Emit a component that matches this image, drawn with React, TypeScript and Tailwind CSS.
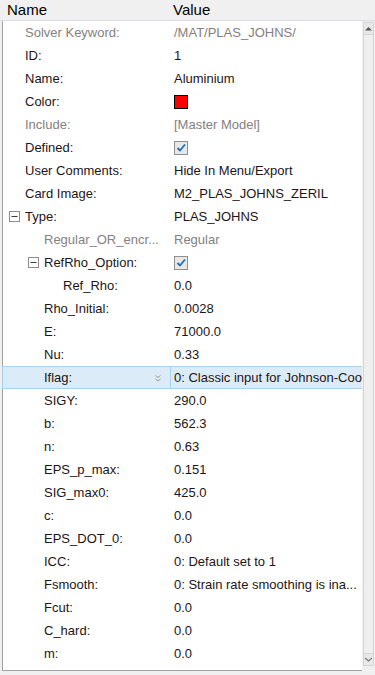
import React from "react";

type Row = {
  label: string;
  value?: string;
  level: number;
  gray?: boolean;
  valueGray?: boolean;
  expander?: boolean;
  kind?: "color" | "check";
  selected?: boolean;
};

const rows: Row[] = [
  { label: "Solver Keyword:", value: "/MAT/PLAS_JOHNS/", level: 0, gray: true, valueGray: true },
  { label: "ID:", value: "1", level: 0 },
  { label: "Name:", value: "Aluminium", level: 0 },
  { label: "Color:", level: 0, kind: "color" },
  { label: "Include:", value: "[Master Model]", level: 0, gray: true, valueGray: true },
  { label: "Defined:", level: 0, kind: "check" },
  { label: "User Comments:", value: "Hide In Menu/Export", level: 0 },
  { label: "Card Image:", value: "M2_PLAS_JOHNS_ZERIL", level: 0 },
  { label: "Type:", value: "PLAS_JOHNS", level: 0, expander: true },
  { label: "Regular_OR_encr...", value: "Regular", level: 1, gray: true, valueGray: true },
  { label: "RefRho_Option:", level: 1, kind: "check", expander: true },
  { label: "Ref_Rho:", value: "0.0", level: 2 },
  { label: "Rho_Initial:", value: "0.0028", level: 1 },
  { label: "E:", value: "71000.0", level: 1 },
  { label: "Nu:", value: "0.33", level: 1 },
  { label: "Iflag:", value: "0: Classic input for Johnson-Cook", level: 1, selected: true },
  { label: "SIGY:", value: "290.0", level: 1 },
  { label: "b:", value: "562.3", level: 1 },
  { label: "n:", value: "0.63", level: 1 },
  { label: "EPS_p_max:", value: "0.151", level: 1 },
  { label: "SIG_max0:", value: "425.0", level: 1 },
  { label: "c:", value: "0.0", level: 1 },
  { label: "EPS_DOT_0:", value: "0.0", level: 1 },
  { label: "ICC:", value: "0: Default set to 1", level: 1 },
  { label: "Fsmooth:", value: "0: Strain rate smoothing is ina...", level: 1 },
  { label: "Fcut:", value: "0.0", level: 1 },
  { label: "C_hard:", value: "0.0", level: 1 },
  { label: "m:", value: "0.0", level: 1 },
];

const pad = ["pl-[22px]", "pl-[41px]", "pl-[60px]"];
const expPos = ["left-[6px]", "left-[25px]", "left-[44px]"];

function Minus() {
  return (
    <svg width="11" height="11" viewBox="0 0 11 11">
      <rect x="0.5" y="0.5" width="10" height="10" fill="#fdfdfd" stroke="#8c8c8c" />
      <line x1="2.5" y1="5.5" x2="8.5" y2="5.5" stroke="#3c3c3c" strokeWidth="1" />
    </svg>
  );
}

function Check() {
  return (
    <svg width="14" height="14" viewBox="0 0 14 14">
      <rect x="0.5" y="0.5" width="13" height="13" fill="#e8e8e8" stroke="#8f8f8f" />
      <path d="M3.5 7 L6 9.5 L11 3.5" fill="none" stroke="#1f6fb0" strokeWidth="1.8" />
    </svg>
  );
}

function Swatch() {
  return <div className="w-[14px] h-[14px] bg-[#ff0000] border border-black" />;
}

export default function App() {
  return (
    <div
      className="w-[375px] h-[675px] bg-[#f0f0f0] flex flex-col overflow-hidden text-[13px] text-[#1e1416]"
      style={{ fontFamily: "'Liberation Sans', Arial, sans-serif" }}
    >
      <div className="h-[21px] flex items-center border-b border-[#d9dce0] text-[15px] text-black shrink-0">
        <div className="w-[171px] pl-[7px]">Name</div>
        <div className="pl-[2px]">Value</div>
      </div>
      <div className="flex flex-1 min-h-0">
        <div className="w-[3px] border-r border-[#a0a0a0] shrink-0" />
        <div className="flex-1 bg-white flex flex-col min-w-0 border-b border-[#a0a0a0]">
          {rows.map((r, i) => (
            <div
              key={i}
              className={`h-[23px] flex items-center shrink-0 ${
                r.selected ? "bg-[#dcebf8] border border-[#a9cff2] -mx-px" : ""
              }`}
            >
              <div
                className={`relative w-[168px] h-full flex items-center whitespace-nowrap shrink-0 ${pad[r.level]} ${
                  r.gray ? "text-[#858080]" : ""
                } ${r.selected ? "border-r border-[#a9cff2] w-[168px]" : ""}`}
              >
                {r.expander && (
                  <div className={`absolute ${expPos[r.level]} top-[6px] flex`}>
                    <Minus />
                  </div>
                )}
                {r.label}
                {r.selected && (
                  <svg className="absolute right-[9px] top-[8px]" width="6" height="7" viewBox="0 0 6 7">
                    <path d="M0.5 0.5 L3 2.5 L5.5 0.5 M0.5 4 L3 6 L5.5 4" fill="none" stroke="#9a9a9a" strokeWidth="1" />
                  </svg>
                )}
              </div>
              <div
                className={`flex-1 min-w-0 pl-[3px] whitespace-nowrap overflow-hidden ${
                  r.valueGray ? "text-[#858080]" : ""
                }`}
              >
                {r.kind === "color" ? <Swatch /> : r.kind === "check" ? <Check /> : r.value}
              </div>
            </div>
          ))}
        </div>
        <div className="w-[13px] shrink-0 flex flex-col pb-[5px] bg-[#f0f0f0]">
          <div className="h-[13px] mt-[1px] mx-px bg-[#e8e8e8] border border-[#d6d6d6] flex items-center justify-center">
            <svg width="7" height="5" viewBox="0 0 7 5">
              <path d="M0 4.5 L3.5 1 L7 4.5 Z" fill="#555" />
            </svg>
          </div>
          <div className="flex-1 mx-px border-x border-[#d6d6d6] bg-[#efefef]" />
          <div className="h-[13px] mx-px bg-[#e8e8e8] border border-[#d6d6d6] flex items-center justify-center">
            <svg width="7" height="5" viewBox="0 0 7 5">
              <path d="M0 1 L3.5 4 L7 1" fill="none" stroke="#777" strokeWidth="1.2" />
            </svg>
          </div>
        </div>
      </div>
      <div className="h-[4px] shrink-0" />
    </div>
  );
}
